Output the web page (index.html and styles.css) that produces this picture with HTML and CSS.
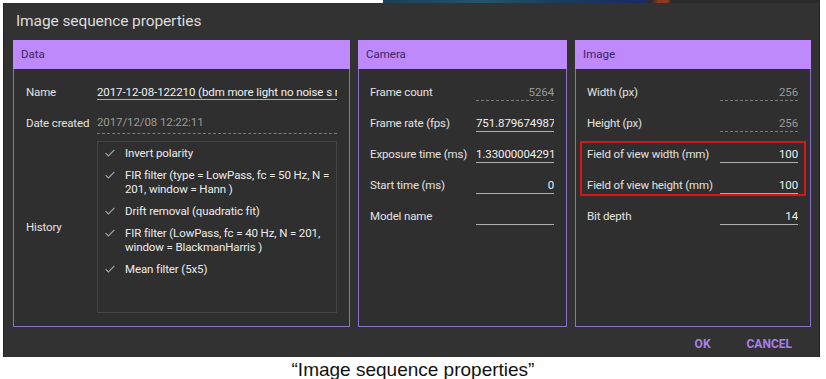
FILE: index.html
```html
<!DOCTYPE html>
<html>
<head>
    <title>Image sequence properties</title>
    <link rel="stylesheet" href="styles.css">
</head>
<body>
    <div class="backdrop-strip"></div>
    <div class="dialog">
        <h1 class="dialog-title">Image sequence properties</h1>
        <div class="panels">
            <!-- Data -->
            <section class="panel panel-data">
                <div class="panel-header">Data</div>
                <div class="panel-body">
                    <div class="row">
                        <span class="label label-data">Name</span>
                        <div class="field field-wide"><span class="value">2017-12-08-122210 (bdm more light no noise s r</span></div>
                    </div>
                    <div class="row">
                        <span class="label label-data">Date created</span>
                        <div class="field field-wide disabled"><span class="value">2017/12/08 12:22:11</span></div>
                    </div>
                    <div class="row row-history">
                        <span class="label label-data">History</span>
                        <ul class="history">
                            <li><svg class="check" width="10" height="8" viewBox="0 0 10 8"><path d="M0.6 4.2 L3.4 7 L9.4 0.8" fill="none" stroke="#a8a8a8" stroke-width="1.1"/></svg><span>Invert polarity</span></li>
                            <li><svg class="check" width="10" height="8" viewBox="0 0 10 8"><path d="M0.6 4.2 L3.4 7 L9.4 0.8" fill="none" stroke="#a8a8a8" stroke-width="1.1"/></svg><span>FIR filter (type = LowPass, fc = 50 Hz, N = 201, window = Hann )</span></li>
                            <li><svg class="check" width="10" height="8" viewBox="0 0 10 8"><path d="M0.6 4.2 L3.4 7 L9.4 0.8" fill="none" stroke="#a8a8a8" stroke-width="1.1"/></svg><span>Drift removal (quadratic fit)</span></li>
                            <li><svg class="check" width="10" height="8" viewBox="0 0 10 8"><path d="M0.6 4.2 L3.4 7 L9.4 0.8" fill="none" stroke="#a8a8a8" stroke-width="1.1"/></svg><span>FIR filter (LowPass, fc = 40 Hz, N = 201, window = BlackmanHarris )</span></li>
                            <li><svg class="check" width="10" height="8" viewBox="0 0 10 8"><path d="M0.6 4.2 L3.4 7 L9.4 0.8" fill="none" stroke="#a8a8a8" stroke-width="1.1"/></svg><span>Mean filter (5x5)</span></li>
                        </ul>
                    </div>
                </div>
            </section>

            <!-- Camera -->
            <section class="panel panel-camera">
                <div class="panel-header">Camera</div>
                <div class="panel-body">
                    <div class="row">
                        <span class="label">Frame count</span>
                        <div class="field disabled right"><span class="value">5264</span></div>
                    </div>
                    <div class="row">
                        <span class="label">Frame rate (fps)</span>
                        <div class="field"><span class="value">751.879674987</span></div>
                    </div>
                    <div class="row">
                        <span class="label">Exposure time (ms)</span>
                        <div class="field"><span class="value">1.33000004291</span></div>
                    </div>
                    <div class="row">
                        <span class="label">Start time (ms)</span>
                        <div class="field right"><span class="value">0</span></div>
                    </div>
                    <div class="row">
                        <span class="label">Model name</span>
                        <div class="field"><span class="value"></span></div>
                    </div>
                </div>
            </section>

            <!-- Image -->
            <section class="panel panel-image">
                <div class="panel-header">Image</div>
                <div class="panel-body">
                    <div class="row">
                        <span class="label">Width (px)</span>
                        <div class="field disabled right"><span class="value">256</span></div>
                    </div>
                    <div class="row">
                        <span class="label">Height (px)</span>
                        <div class="field disabled right"><span class="value">256</span></div>
                    </div>
                    <div class="highlight">
                        <div class="row">
                            <span class="label">Field of view width (mm)</span>
                            <div class="field right"><span class="value">100</span></div>
                        </div>
                        <div class="row">
                            <span class="label">Field of view height (mm)</span>
                            <div class="field right"><span class="value">100</span></div>
                        </div>
                    </div>
                    <div class="row">
                        <span class="label">Bit depth</span>
                        <div class="field right"><span class="value">14</span></div>
                    </div>
                </div>
            </section>
        </div>
        <div class="actions">
            <button class="btn">OK</button>
            <button class="btn">CANCEL</button>
        </div>
    </div>
    <p class="caption">“Image sequence properties”</p>
</body>
</html>
```

FILE: styles.css
```css
body {
    margin: 0;
    padding: 0;
    background-color: #fff;
    font-family: Roboto, "Liberation Sans", sans-serif;
}

.backdrop-strip {
    height: 3px;
    margin-left: 3px;
    width: 817px;
    background: linear-gradient(to right,
        #fff 0, #fff 380px,
        #1d3f55 380px, #23546a 480px, #1b3b5c 560px, #1a2a66 640px,
        #2a2a2a 648px, #8a3a1e 655px, #8a3a1e 665px, #2a2a2a 668px);
}

.dialog {
    margin-left: 3px;
    width: 815px;
    height: 354px;
    background-color: #323232;
    border-left: 1px solid #222;
    border-right: 1px solid #222;
    display: flex;
    flex-direction: column;
}

.dialog-title {
    margin: 0;
    padding: 9px 0 0 12px;
    height: 28px;
    font-size: 15.5px;
    font-weight: 400;
    color: #dcdcdc;
    letter-spacing: -0.1px;
}

.panels {
    display: flex;
    gap: 8px;
    padding-left: 9px;
}

.panel {
    display: flex;
    flex-direction: column;
    height: 286px;
    border: 1px solid #8b71c9;
    border-top: none;
    background-color: #2f2f2f;
}

.panel-data { width: 335px; }
.panel-camera { width: 207px; }
.panel-image { width: 234px; }

.panel-header {
    height: 29px;
    line-height: 29px;
    margin: 0 -1px;
    padding-left: 8px;
    background-color: #bd89fb;
    color: #3d2368;
    font-size: 11.5px;
}

.panel-body {
    padding: 7px 12px 0 11px;
}

.panel-data .panel-body {
    padding-left: 12px;
}

.row {
    display: flex;
    align-items: flex-start;
    justify-content: space-between;
    height: 31px;
}

.label {
    padding-top: 9px;
    font-size: 11.5px;
    letter-spacing: -0.15px;
    color: #e2e2e2;
    white-space: nowrap;
}

.label-data {
    width: 71px;
    flex-shrink: 0;
}

.field {
    width: 78px;
    height: 25px;
    border-bottom: 1px solid #b0b0b0;
    overflow: hidden;
    box-sizing: border-box;
    padding-top: 9px;
}

.field-wide {
    width: auto;
    flex: 1;
}

.field.disabled {
    border-bottom: 1px dashed #7a7a7a;
}

.field .value {
    display: block;
    font-size: 11.5px;
    letter-spacing: -0.1px;
    color: #f0f0f0;
    white-space: nowrap;
    line-height: 14px;
}

.field.disabled .value {
    color: #9a9a9a;
}

.field.right .value {
    text-align: right;
}

.panel-data .row:nth-child(1) .field {
    height: 24px;
}

.panel-data .row:nth-child(2) {
    height: 34px;
}

.panel-data .row:nth-child(2) .field {
    height: 27px;
    padding-top: 8px;
}

.row-history {
    height: auto;
    align-items: center;
}

.row-history .label {
    padding-top: 0;
}

.history {
    flex: 1;
    list-style: none;
    margin: 0;
    padding: 4px 3px 0 6px;
    border: 1px solid #454545;
    box-sizing: border-box;
    height: 172px;
}

.history li {
    display: flex;
    align-items: flex-start;
    margin-bottom: 8px;
    font-size: 11.5px;
    letter-spacing: -0.12px;
    line-height: 14px;
    color: #ececec;
}

.check {
    flex-shrink: 0;
    margin: 3px 10px 0 1px;
}

.highlight {
    position: relative;
}

.highlight::after {
    content: "";
    position: absolute;
    left: -7px;
    right: -8px;
    top: 3px;
    bottom: 4px;
    border: 2px solid #dc1414;
    pointer-events: none;
}

.actions {
    display: flex;
    justify-content: flex-end;
    padding: 7px 11px 0 0;
    gap: 4px;
}

.btn {
    background: none;
    border: none;
    padding: 3px 16px;
    font-family: Roboto, "Liberation Sans", sans-serif;
    font-size: 12px;
    font-weight: 700;
    color: #a880e8;
    cursor: pointer;
}

.caption {
    margin: 2px 0 0;
    text-align: center;
    font-family: "Liberation Sans", Arial, sans-serif;
    font-size: 19px;
    color: #111;
}
```
